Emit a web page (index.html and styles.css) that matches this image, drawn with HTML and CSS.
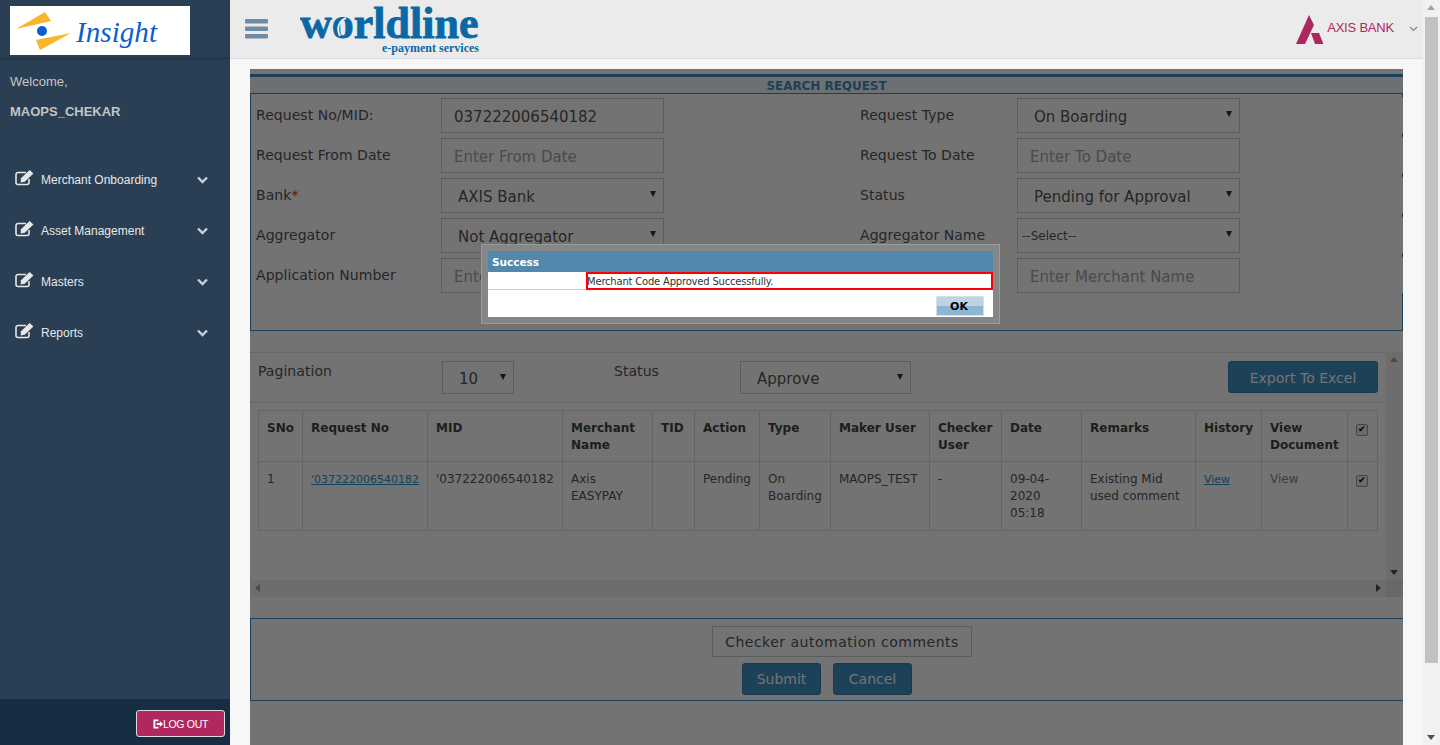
FILE: index.html

```html
<!DOCTYPE html>
<html lang="en">
<head>
    <meta charset="UTF-8">
    <title>Insight - Search Request</title>
    <link rel="stylesheet" href="styles.css">
</head>
<body>

<div class="app">

    <aside class="sidebar">
        <div class="side-top">
            <div class="insight-logo">
                <svg width="180" height="49" viewBox="0 0 180 49">
                    <polygon points="6,23 35,6 41,15" fill="#fbb52b"/>
                    <polygon points="61,27 26,34 30,44" fill="#fbb52b"/>
                    <circle cx="32" cy="25" r="5" fill="#0a5fd0"/>
                    <text x="66" y="36" textLength="81" lengthAdjust="spacingAndGlyphs" class="insight-text">Insight</text>
                </svg>
            </div>
        </div>
        <p class="welcome">Welcome,</p>
        <p class="username">MAOPS_CHEKAR</p>
        <ul class="menu">
            <li class="menu-item">
                <svg class="edit-icon" width="19" height="16" viewBox="0 0 19 16"><path d="M14 9v3.5a2 2 0 0 1-2 2H3a2 2 0 0 1-2-2V4.5a2 2 0 0 1 2-2h8" fill="none" stroke="currentColor" stroke-width="1.6"/><path d="M6 8.2 14.6 0 18.4 3.4 9.8 11.8 5.6 12.6Z" fill="currentColor"/></svg>
                <span class="menu-text">Merchant Onboarding</span>
                <svg class="chev" width="11" height="8" viewBox="0 0 11 8"><polyline points="1,1.5 5.5,6 10,1.5" fill="none" stroke="currentColor" stroke-width="2.4"/></svg>
            </li>
            <li class="menu-item">
                <svg class="edit-icon" width="19" height="16" viewBox="0 0 19 16"><path d="M14 9v3.5a2 2 0 0 1-2 2H3a2 2 0 0 1-2-2V4.5a2 2 0 0 1 2-2h8" fill="none" stroke="currentColor" stroke-width="1.6"/><path d="M6 8.2 14.6 0 18.4 3.4 9.8 11.8 5.6 12.6Z" fill="currentColor"/></svg>
                <span class="menu-text">Asset Management</span>
                <svg class="chev" width="11" height="8" viewBox="0 0 11 8"><polyline points="1,1.5 5.5,6 10,1.5" fill="none" stroke="currentColor" stroke-width="2.4"/></svg>
            </li>
            <li class="menu-item">
                <svg class="edit-icon" width="19" height="16" viewBox="0 0 19 16"><path d="M14 9v3.5a2 2 0 0 1-2 2H3a2 2 0 0 1-2-2V4.5a2 2 0 0 1 2-2h8" fill="none" stroke="currentColor" stroke-width="1.6"/><path d="M6 8.2 14.6 0 18.4 3.4 9.8 11.8 5.6 12.6Z" fill="currentColor"/></svg>
                <span class="menu-text">Masters</span>
                <svg class="chev" width="11" height="8" viewBox="0 0 11 8"><polyline points="1,1.5 5.5,6 10,1.5" fill="none" stroke="currentColor" stroke-width="2.4"/></svg>
            </li>
            <li class="menu-item">
                <svg class="edit-icon" width="19" height="16" viewBox="0 0 19 16"><path d="M14 9v3.5a2 2 0 0 1-2 2H3a2 2 0 0 1-2-2V4.5a2 2 0 0 1 2-2h8" fill="none" stroke="currentColor" stroke-width="1.6"/><path d="M6 8.2 14.6 0 18.4 3.4 9.8 11.8 5.6 12.6Z" fill="currentColor"/></svg>
                <span class="menu-text">Reports</span>
                <svg class="chev" width="11" height="8" viewBox="0 0 11 8"><polyline points="1,1.5 5.5,6 10,1.5" fill="none" stroke="currentColor" stroke-width="2.4"/></svg>
            </li>
        </ul>
        <div class="side-foot">
            <button class="logout">
                <svg width="10" height="10" viewBox="0 0 11 10"><path d="M6 1H1.5v8H6" fill="none" stroke="#fff" stroke-width="2"/><path d="M4 3.8h3.5V1.6L11 5 7.5 8.4V6.2H4Z" fill="#fff"/></svg>
                LOG OUT
            </button>
        </div>
    </aside>

    <div class="main">
        <header class="topbar">
            <svg class="burger" width="23" height="20" viewBox="0 0 23 20">
                <rect y="0" width="23" height="4.5" rx="1" fill="#6f8aa3"/>
                <rect y="7.5" width="23" height="4.5" rx="1" fill="#6f8aa3"/>
                <rect y="15" width="23" height="4.5" rx="1" fill="#6f8aa3"/>
            </svg>
            <svg class="worldline" width="182" height="57" viewBox="0 0 182 57">
                <text x="0" y="38" class="wl-text">worldline</text>
                <path d="M46 18c-7 3-10 10-6 18" fill="none" stroke="#ebebeb" stroke-width="2"/>
                <text x="82" y="52" class="wl-sub">e-payment services</text>
            </svg>
            <div class="axis">
                <svg width="28" height="30" viewBox="0 0 28 30">
                    <polygon points="13,0 18,10 9,29 0,29" fill="#ae2760"/>
                    <polygon points="15,18 23,18 27.5,29 19,29" fill="#ae2760"/>
                </svg>
                <span class="axis-text">AXIS BANK</span>
                <svg class="axis-chev" width="9" height="6" viewBox="0 0 9 6"><polyline points="1,1 4.5,4.5 8,1" fill="none" stroke="#6f8aa3" stroke-width="1.2"/></svg>
            </div>
        </header>

        <div class="content">
            <div class="panel">
                <div class="panel-head">SEARCH REQUEST</div>

                <div class="search-box">
                    <div class="form-row">
                        <label class="lbl">Request No/MID:</label>
                        <input class="field" type="text" value="037222006540182">
                        <label class="lbl lbl-right">Request Type</label>
                        <span class="select"><select><option>On Boarding</option></select></span>
                    </div>
                    <div class="form-row">
                        <label class="lbl">Request From Date</label>
                        <input class="field" type="text" placeholder="Enter From Date">
                        <label class="lbl lbl-right">Request To Date</label>
                        <input class="field" type="text" placeholder="Enter To Date">
                    </div>
                    <div class="form-row">
                        <label class="lbl">Bank<span class="req">*</span></label>
                        <span class="select"><select><option>AXIS Bank</option></select></span>
                        <label class="lbl lbl-right">Status</label>
                        <span class="select"><select><option>Pending for Approval</option></select></span>
                    </div>
                    <div class="form-row">
                        <label class="lbl">Aggregator</label>
                        <span class="select"><select><option>Not Aggregator</option></select></span>
                        <label class="lbl lbl-right">Aggregator Name</label>
                        <span class="select select-small"><select><option>--Select--</option></select></span>
                    </div>
                    <div class="form-row">
                        <label class="lbl">Application Number</label>
                        <input class="field" type="text" placeholder="Enter Application Number">
                        <label class="lbl lbl-right">Merchant Name</label>
                        <input class="field" type="text" placeholder="Enter Merchant Name">
                    </div>
                </div>

                <div class="results">
                    <div class="results-body">
                        <div class="toolbar">
                            <label class="tool-lbl tool-page">Pagination</label>
                            <span class="select select-page"><select><option>10</option></select></span>
                            <label class="tool-lbl tool-status">Status</label>
                            <span class="select select-status"><select><option>Approve</option></select></span>
                            <button class="btn btn-export">Export To Excel</button>
                        </div>
                        <table class="grid">
                            <colgroup>
                                <col class="c45"><col class="c125"><col class="c135"><col class="c90"><col class="c42">
                                <col class="c65"><col class="c71"><col class="c99"><col class="c72"><col class="c80">
                                <col class="c114"><col class="c66"><col class="c86"><col class="c30">
                            </colgroup>
                            <tr>
                                <th>SNo</th><th>Request No</th><th>MID</th><th>Merchant Name</th><th>TID</th>
                                <th>Action</th><th>Type</th><th>Maker User</th><th>Checker User</th><th>Date</th>
                                <th>Remarks</th><th>History</th><th>View Document</th>
                                <th class="chk-cell"><input class="chk" type="checkbox" checked></th>
                            </tr>
                            <tr>
                                <td>1</td><td><a class="link" href="#">'037222006540182</a></td><td>'037222006540182</td>
                                <td>Axis EASYPAY</td><td></td><td>Pending</td><td>On Boarding</td><td>MAOPS_TEST</td><td>-</td>
                                <td class="date-cell">09-04-2020 05:18</td><td>Existing Mid used comment</td>
                                <td><a class="link" href="#">View</a></td><td class="muted">View</td>
                                <td class="chk-cell"><input class="chk" type="checkbox" checked></td>
                            </tr>
                        </table>
                    </div>
                    <div class="vbar"><span class="arrow up"></span><span class="arrow down"></span></div>
                    <div class="hbar"><span class="arrow left"></span><span class="arrow right"></span></div>
                    <div class="corner"></div>
                </div>

                <div class="action-box">
                    <input class="comment" type="text" value="Checker automation comments">
                    <div class="actions">
                        <button class="btn btn-submit">Submit</button>
                        <button class="btn btn-cancel">Cancel</button>
                    </div>
                </div>

                <div class="shade"></div>

                <div class="dialog">
                    <div class="dialog-in">
                        <div class="dialog-title">Success</div>
                        <div class="dialog-msg-row">
                            <div class="dialog-gap"></div>
                            <div class="dialog-msg">Merchant Code Approved Successfully.</div>
                        </div>
                        <div class="dialog-foot"><button class="ok">OK</button></div>
                    </div>
                </div>
            </div>
        </div>
    </div>

    <div class="pagebar">
        <span class="arrow up page-up"></span>
        <div class="thumb"></div>
        <span class="arrow down page-down"></span>
    </div>

</div>

</body>
</html>
```

FILE: styles.css

```css
* { box-sizing: border-box; }
body { margin: 0; overflow: hidden; background: #f7f7f7; color: #555; font-family: "DejaVu Sans", sans-serif; }
p, ul { margin: 0; padding: 0; }
button { font-family: inherit; cursor: pointer; }

.app { display: flex; height: 100vh; }

/* sidebar */
.sidebar { width: 230px; flex: none; display: flex; flex-direction: column; background: #2a3f54; font-family: "Liberation Sans", Arial, sans-serif; }
.side-top { height: 57px; padding: 6px 10px 0; box-shadow: 0 2px 4px rgba(0,0,0,.15); }
.insight-logo { width: 180px; height: 49px; background: #fff; }
.insight-logo svg { display: block; }
.insight-text { font-family: "Liberation Serif", serif; font-style: italic; font-size: 30px; fill: #0a5fd0; }
.welcome { margin-top: 17px; padding-left: 10px; font-size: 13px; line-height: 16px; color: #c4c4c4; }
.username { margin-top: 14px; padding-left: 10px; font-size: 13px; line-height: 16px; font-weight: bold; color: #c4c4c4; }
.menu { list-style: none; margin-top: 34px; flex: 1; }
.menu-item { display: flex; align-items: center; height: 51px; padding: 0 22px 0 15px; color: #e7e7e7; }
.edit-icon { margin-top: -4px; flex: none; }
.menu-text { margin-left: 7px; font-size: 12px; }
.chev { margin-left: auto; color: #c5d0da; }
.side-foot { height: 46px; display: flex; justify-content: flex-end; align-items: flex-start; padding: 11px 5px 0 0; background: #172d44; }
.logout { display: flex; align-items: center; justify-content: center; gap: 0; width: 89px; height: 27px; padding: 0; background: #b0285f; border: 1px solid #dcdcdc; border-radius: 3px; color: #fff; font-family: "Liberation Sans", Arial, sans-serif; font-size: 10.5px; letter-spacing: -.3px; }

/* top bar */
.main { flex: 1; min-width: 0; display: flex; flex-direction: column; }
.topbar { height: 59px; flex: none; display: flex; align-items: flex-start; background: #ebebeb; border-bottom: 1px solid #d9dee4; }
.burger { margin: 19px 0 0 15px; }
.worldline { margin: 0 0 0 32px; }
.wl-text { font-family: "Liberation Serif", serif; font-weight: bold; font-size: 44px; fill: #0a68a6; stroke: #0a68a6; stroke-width: .8px; }
.wl-sub { font-family: "Liberation Serif", serif; font-weight: bold; font-size: 12px; fill: #0a68a6; }
.axis { margin: 15px 5px 0 auto; display: flex; align-items: flex-start; }
.axis-text { margin: 4px 0 0 3px; font-family: "Liberation Sans", Arial, sans-serif; font-size: 13px; line-height: 18px; letter-spacing: -.2px; color: #ae2760; }
.axis-chev { margin: 11px 0 0 15px; }

/* panel */
.content { flex: 1; min-height: 0; padding: 10px 20px 0; }
.panel { position: relative; height: 100%; padding-top: 5px; background: #fff; overflow: hidden; }
.panel-head { height: 19px; padding-top: 2px; background: #f0f8fc; border-top: 3px solid #3d8fc4; text-align: center; font-size: 12px; line-height: 15px; font-weight: bold; letter-spacing: -.05px; color: #3d8fc4; }
.search-box { height: 238px; padding-top: 3px; border: 1px solid #3d8fc4; }
.form-row { display: flex; height: 36px; margin-bottom: 4px; margin-right: -1px; padding: 1px 0 0 5px; background: #fff; }
.lbl { width: 185px; flex: none; font-size: 14px; line-height: 34px; letter-spacing: .05px; }
.lbl-right { width: 157px; margin-left: 196px; }
.req { color: #d9322e; }
.field { width: 223px; height: 35px; padding: 2px 12px 0; background: #fff; border: 1px solid #ccc; font-family: inherit; font-size: 15px; color: #555; outline: none; }
.field::placeholder { color: #a5a5a5; opacity: 1; }
.select { position: relative; display: block; width: 223px; height: 35px; flex: none; }
.select select { width: 100%; height: 100%; padding: 2px 0 0 16px; appearance: none; background: #fff; border: 1px solid #ccc; border-radius: 0; font-family: inherit; font-size: 15px; color: #555; outline: none; }
.select::after { content: ""; position: absolute; right: 8px; top: 13px; border: 3.5px solid transparent; border-top: 6px solid #333; border-bottom: 0; }
.select-small select { padding: 0 0 0 4px; font-size: 12px; }

/* results */
.results { display: grid; grid-template-columns: 1fr 17px; grid-template-rows: 1fr 17px; height: 245px; margin-top: 21px; }
.results-body { overflow: hidden; border-top: 1px solid #e4e4e4; }
.toolbar { display: flex; align-items: flex-start; height: 50px; padding: 8px 8px 0; border-bottom: 1px solid #e4e4e4; }
.tool-lbl { font-size: 14px; line-height: 20px; letter-spacing: .05px; }
.tool-page { width: 184px; }
.select-page { width: 72px; height: 33px; }
.select-status { width: 171px; height: 33px; }
.tool-status { width: 126px; margin-left: 100px; }
.btn { background: #3e91c6; border: 1px solid #3480b2; border-radius: 3px; color: #fff; font-size: 14px; }
.btn-export { width: 150px; height: 32px; margin-left: auto; padding-top: 3px; }

.grid { width: 1119px; margin: 7px 0 0 8px; table-layout: fixed; border-collapse: collapse; font-size: 12px; line-height: 17px; }
.grid th, .grid td { border: 1px solid #ddd; text-align: left; vertical-align: top; }
.grid th { padding: 9px 2px 7px 8px; color: #444; }
.grid td { padding: 9px 2px 8px 8px; }
.grid .date-cell { padding-right: 8px; }
.c45 { width: 44px; } .c125 { width: 125px; } .c135 { width: 135px; } .c90 { width: 90px; } .c42 { width: 42px; }
.c65 { width: 65px; } .c71 { width: 71px; } .c99 { width: 99px; } .c72 { width: 72px; } .c80 { width: 80px; }
.c114 { width: 114px; } .c66 { width: 66px; } .c86 { width: 86px; } .c30 { width: 30px; }
.link { font-size: 11px; color: #2a8fc8; }
.muted { color: #888; }
.grid .chk-cell { padding: 4px 0 0 7px; }
.chk { appearance: none; display: block; position: relative; width: 12px; height: 12px; margin: 9px 0 0 1px; background: #eee; border: 1px solid #999; border-radius: 2px; }
.chk::after { content: "✔"; position: absolute; left: 1px; top: -2px; font-size: 9px; line-height: 13px; color: #000; }

.vbar, .hbar, .corner { position: relative; background: #f1f1f1; }
.corner { background: #e6e6e6; }
.arrow { position: absolute; width: 0; height: 0; border: 4px solid transparent; }
.arrow.up { top: 5px; left: 4px; border-top: 0; border-bottom: 5px solid #a3a3a3; }
.arrow.down { bottom: 5px; left: 4px; border-bottom: 0; border-top: 5px solid #505050; }
.arrow.left { top: 4px; left: 5px; border-left: 0; border-right: 5px solid #a3a3a3; }
.arrow.right { top: 4px; right: 5px; border-right: 0; border-left: 5px solid #505050; }

/* bottom box */
.action-box { display: flex; flex-direction: column; align-items: center; height: 83px; margin-top: 21px; padding-top: 7px; border: 1px solid #3d8fc4; border-right: 0; }
.comment { width: 260px; height: 31px; margin-left: 30px; padding: 0 8px; text-align: center; background: #fff; border: 1px solid #ccc; font-family: inherit; font-size: 14px; letter-spacing: .5px; color: #555; outline: none; }
.actions { display: flex; gap: 12px; margin-top: 6px; }
.btn-submit, .btn-cancel { width: 79px; height: 32px; }

/* overlay and dialog */
.shade { position: absolute; inset: 0; background: rgba(0,0,0,.55); }
.dialog { position: absolute; left: 231px; top: 175px; width: 519px; height: 80px; padding: 6px; background: #868686; border: 1px solid #9a9a9a; }
.dialog-in { height: 100%; background: #fff; display: flex; flex-direction: column; }
.dialog-title { height: 21px; padding: 1px 0 0 4px; background: #5288ab; color: #fff; font-size: 10.5px; line-height: 21px; font-weight: bold; }
.dialog-msg-row { display: flex; height: 18px; }
.dialog-gap { width: 98px; flex: none; border-bottom: 1px solid #ccc; }
.dialog-msg { flex: 1; border: 2px solid #f00; font-size: 10px; line-height: 16px; letter-spacing: -.2px; text-indent: -1px; color: #333; }
.dialog-foot { display: flex; justify-content: flex-end; padding: 6px 9px 0 0; }
.ok { width: 48px; height: 20px; padding: 0 2px 0 0; background: linear-gradient(#bcd5e5 50%, #8cb6d2 50%); border: 1px solid #d5e0e7; font-size: 11px; font-weight: bold; color: #000; }

/* page scrollbar */
.pagebar { position: relative; width: 17px; flex: none; padding-top: 17px; background: #f1f1f1; }
.thumb { width: 13px; height: 646px; margin-left: 2px; background: #c1c1c1; }
```
